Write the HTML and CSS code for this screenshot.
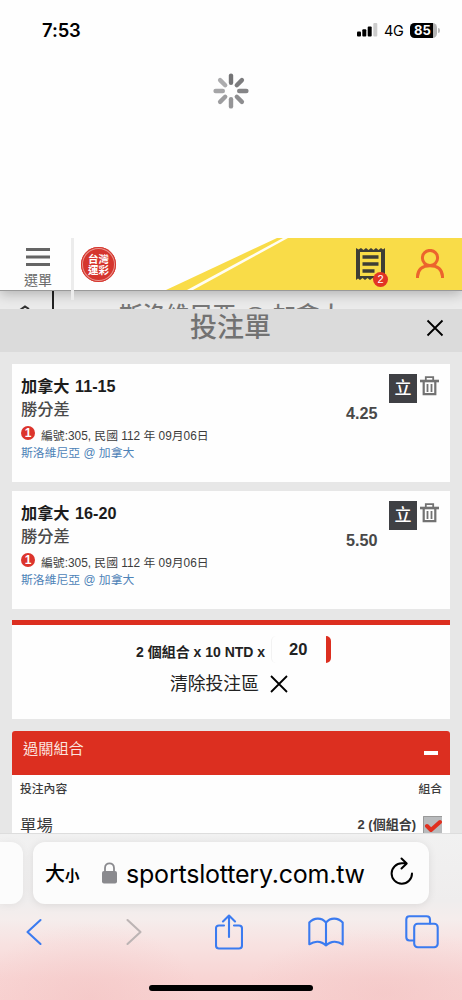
FILE: index.html
```html
<!DOCTYPE html>
<html lang="zh-Hant">
<head>
<meta charset="utf-8">
<title>投注單</title>
<link rel="stylesheet" href="styles.css">
</head>
<body>
<div class="screen">
  <div class="top">
    <div class="status">
      <span class="time">7:53</span>
      <div class="status-right">
        <svg class="signal" width="21" height="14" viewBox="0 0 21 14"><rect x="0" y="8.5" width="4" height="5" rx="1"/><rect x="5.3" y="6.3" width="4" height="7.2" rx="1"/><rect x="10.7" y="3.5" width="4" height="10" rx="1"/><rect x="16.3" y="0" width="4" height="13.5" rx="1" fill="#ccc"/></svg>
        <span class="network">4G</span>
        <span class="battery"><span class="battery-body">85</span><i class="battery-tip"></i></span>
      </div>
    </div>
    <svg class="spinner" width="36" height="36" viewBox="-18 -18 36 36" stroke-width="4.4" stroke-linecap="round">
      <path stroke="#747476" d="M0-8.2V-15.4"/><path stroke="#7c7c7e" d="M5.8-5.8 10.9-10.9"/><path stroke="#858587" d="M8.2 0H15.4"/><path stroke="#8d8d8f" d="M5.8 5.8 10.9 10.9"/><path stroke="#959597" d="M0 8.2V15.4"/><path stroke="#9d9d9f" d="M-5.8 5.8-10.9 10.9"/><path stroke="#a5a5a7" d="M-8.2 0H-15.4"/><path stroke="#acacae" d="M-5.8-5.8-10.9-10.9"/>
    </svg>
  </div>

  <header class="site-header">
    <svg class="banner" width="462" height="52" viewBox="0 0 462 52"><path fill="#f9dc48" d="M166 52 277 0H462V52Z"/><path fill="#fffdf2" d="M187 52 283 0H288L193 52Z"/></svg>
    <div class="menu">
      <svg width="24" height="20" viewBox="0 0 24 20"><path d="M0 2.500H24M0 10H24M0 17.500H24" stroke="#656565" stroke-width="2.800"/></svg>
      <span>選單</span>
    </div>
    <i class="divider"></i>
    <div class="logo"><span>台灣<br>運彩</span></div>
    <div class="slip">
      <svg width="30" height="34" viewBox="0 0 30 34"><path fill="#3e3d35" fill-rule="evenodd" d="M0 1 2.500 2.500 5 1 7.500 3 10 1 12.500 3 15 1 17.500 3 20 1 22.500 3 25 1 27 2.500 29 1V33L26.500 31 24 33 21.500 31 19 33 16.500 31 14 33 11.500 31 9 33 6.500 31 4 33 2 31.500 0 33ZM4 5V29H25V5Z"/><path d="M6.500 10H22.500M6.500 17H22.500M6.500 24H18.500" stroke="#3e3d35" stroke-width="3.400"/></svg>
      <span class="badge">2</span>
    </div>
    <svg class="user" width="30" height="30" viewBox="0 0 30 30" fill="none" stroke="#ec642d" stroke-width="3"><circle cx="15" cy="9" r="7.600"/><path d="M2.500 29V27.500C3 20 8 16.800 15 16.800S27 20 27.500 27.500V29"/></svg>
  </header>

  <div class="match-strip">
    <svg class="back" width="20" height="18" viewBox="0 0 20 18"><path d="M9 19 14 15.500 18 18" fill="none" stroke="#333" stroke-width="2"/></svg>
    <i class="match-line"></i>
    <span class="match-name">斯洛維尼亞 @ 加拿大</span>
  </div>

  <div class="sheet-title"><h1>投注單</h1>
    <svg class="close" width="18" height="18" viewBox="0 0 18 18"><path d="M1.500 1.500 16.500 16.500M16.500 1.500 1.500 16.500"/></svg>
  </div>

  <main class="sheet">
    <section class="bet">
      <div class="bet-info">
        <h2>加拿大 11-15</h2>
        <h3>勝分差</h3>
        <p class="meta"><b class="num">1</b>編號:305, 民國 112 年 09月06日</p>
        <p class="match">斯洛維尼亞 @ 加拿大</p>
      </div>
      <span class="odds">4.25</span>
      <div class="actions"><span class="bank">立</span>
        <svg class="trash" width="19" height="20" viewBox="0 0 19 20" fill="none" stroke="#727272"><path stroke-width="2.600" d="M0 5H19"/><path stroke-width="1.800" d="M5.800 4V1.200H13.200V4"/><path stroke-width="2.200" d="M3.700 5V18.200H15.300V5"/><path stroke-width="1.800" d="M7.500 8V16M11.500 8V16"/></svg>
      </div>
    </section>
    <section class="bet">
      <div class="bet-info">
        <h2>加拿大 16-20</h2>
        <h3>勝分差</h3>
        <p class="meta"><b class="num">1</b>編號:305, 民國 112 年 09月06日</p>
        <p class="match">斯洛維尼亞 @ 加拿大</p>
      </div>
      <span class="odds">5.50</span>
      <div class="actions"><span class="bank">立</span>
        <svg class="trash" width="19" height="20" viewBox="0 0 19 20" fill="none" stroke="#727272"><path stroke-width="2.600" d="M0 5H19"/><path stroke-width="1.800" d="M5.800 4V1.200H13.200V4"/><path stroke-width="2.200" d="M3.700 5V18.200H15.300V5"/><path stroke-width="1.800" d="M7.500 8V16M11.500 8V16"/></svg>
      </div>
    </section>

    <section class="total">
      <div class="stake"><span class="stake-label">2 個組合 x 10 NTD x</span><span class="stake-input">20</span></div>
      <div class="clear"><span>清除投注區</span>
        <svg class="close" width="18" height="18" viewBox="0 0 18 18"><path d="M1 1 17 17M17 1 1 17"/></svg>
      </div>
    </section>

    <section class="combos">
      <div class="combo-head"><span>過關組合</span><i></i></div>
      <div class="combo-cols"><span>投注內容</span><span>組合</span></div>
      <div class="combo-row"><span class="combo-name">單場</span><span class="combo-count">2 (個組合)</span>
        <svg class="check" width="19" height="19" viewBox="0 0 19 19"><rect width="19" height="19" fill="#b9bbbd"/><path d="M.5 19V.5H19" fill="none" stroke="#999" /><path d="M4 10 8 14 17 6" fill="none" stroke="#e03020" stroke-width="4" stroke-linecap="round" stroke-linejoin="round"/></svg>
      </div>
    </section>
  </main>

  <footer class="browser">
    <div class="address-row">
      <div class="prev-tab"></div>
      <div class="address">
        <span class="big">大</span><span class="small">小</span>
        <svg class="lock" width="15" height="22" viewBox="0 0 15 22"><rect y="9" width="15" height="12.500" rx="2" fill="#8a8a8e"/><path d="M3 10V6C3-.3 12-.3 12 6V10" fill="none" stroke="#8a8a8e" stroke-width="1.800"/></svg>
        <span class="url">sportslottery.com.tw</span>
        <svg class="reload" width="24" height="28" viewBox="0 0 24 28" fill="none" stroke="#000" stroke-width="2" stroke-linecap="round" stroke-linejoin="round"><path d="M22 16.500A10.200 10.200 0 1 1 12 6.300H16.500M11.500 1.500 16.700 6.500 11.500 11.500"/></svg>
      </div>
    </div>
    <nav class="toolbar">
      <svg class="nav-back" width="16" height="28" viewBox="0 0 16 28"><path d="M14.500 2 1.500 14 14.500 26"/></svg>
      <svg class="nav-forward" width="16" height="28" viewBox="0 0 16 28"><path d="M1.500 2 14.500 14 1.500 26"/></svg>
      <svg class="nav-share" width="28" height="36" viewBox="0 0 28 36"><path d="M9 11.500H4Q1 11.500 1 14.500V31.500Q1 34.500 4 34.500H24Q27 34.500 27 31.500V14.500Q27 11.500 24 11.500H19M14 23V2M8 7.500 14 1.500 20 7.500"/></svg>
      <svg class="nav-book" width="36" height="30" viewBox="0 0 36 30"><path d="M18 28.500V5.500C13.500.2 6 .5 1.300 5.500V27.300C6.500 23.800 13 23.800 18 28.500C23 23.800 29.500 23.800 34.700 27.300V5.500C30 .5 22.500.2 18 5.500"/></svg>
      <svg width="34" height="34" viewBox="0 0 34 34"><rect x="9.200" y="8.700" width="23.500" height="23.500" rx="3.500"/><path d="M8.500 25.500H4.500Q1.300 25.500 1.300 22.300V4.500Q1.300 1.300 4.500 1.300H21.500Q25 1.300 25 4.500V8.500"/></svg>
    </nav>
    <div class="home"></div>
  </footer>
</div>
</body>
</html>
```
FILE: styles.css
```css
* { box-sizing: border-box; margin: 0; padding: 0; }
body { width: 462px; height: 1000px; overflow: hidden; font-family: "Liberation Sans", "Noto Sans CJK TC", sans-serif; color: #3c3c3c; background: #e7e7e7; }
svg { display: block; flex: none; }
span, h1, h2, h3, p { white-space: nowrap; }
.screen { height: 1000px; display: flex; flex-direction: column; }

.top { position: relative; z-index: 3; height: 238px; flex: none; background: #fefefe; display: flex; flex-direction: column; align-items: center; }
.status { width: 100%; height: 60px; padding: 0 22px 0 42px; display: flex; align-items: center; justify-content: space-between; font-family: Inter, sans-serif; color: #000; }
.time { font-size: 18.400px; font-weight: 600; letter-spacing: -.1px; line-height: 22px; }
.status-right { display: flex; align-items: center; }
.signal { margin-right: 6px; margin-top: -1px; }
.network { width: 20px; margin-right: 6px; font-size: 14.500px; letter-spacing: -.3px; }
.battery { display: flex; align-items: center; }
.battery-body { width: 27px; height: 15px; border-radius: 4.500px; background: linear-gradient(90deg, #000 85%, #b4b4b4 85%); color: #fff; font-size: 13px; font-weight: 700; line-height: 15px; padding-left: 4px; }
.battery-tip { width: 2px; height: 5px; margin-left: 1px; background: #bbb; border-radius: 0 2px 2px 0; }
.spinner { margin-top: 13px; }

.site-header { position: relative; z-index: 2; height: 53px; flex: none; display: flex; background: #fefefe; border-bottom: 1px solid #999; box-shadow: 0 3px 12px rgba(0,0,0,.25); }
.banner { position: absolute; left: 0; top: 0; }
.menu { width: 71px; flex: none; padding: 9px 0 0 24px; font-size: 14px; line-height: 20px; color: #686868; }
.menu svg { margin-left: 2px; }
.menu span { display: block; margin-top: 3px; }
.divider { width: 3px; height: 62px; flex: none; background: #ececec; }
.logo { position: relative; width: 35px; height: 35px; margin: 9px 0 0 7px; border-radius: 50%; background: #d5352d; box-shadow: inset 0 0 0 1px #d5352d, inset 0 0 0 2px #e99790; color: #fff; font-size: 10.500px; line-height: 10.500px; font-weight: 700; text-align: center; padding-top: 7px; }
.slip { position: relative; width: 30px; height: 34px; margin: 9px 29px 0 240px; }
.badge { position: absolute; left: 17px; top: 25px; width: 15px; height: 15px; border-radius: 50%; background: #e23524; color: #fff; font-size: 11px; line-height: 15px; text-align: center; }
.user { position: relative; margin-top: 11px; }

.match-strip { height: 18px; flex: none; overflow: hidden; display: flex; background: #ebebeb; }
.back { margin-left: 11px; }
.match-line { width: 2px; margin-left: 21px; background: #222; }
.match-name { margin-left: 65px; padding-top: 13px; font-size: 23.400px; line-height: 24px; color: #777; font-weight: 500; }

.sheet-title { position: relative; height: 43px; flex: none; display: flex; align-items: center; background: #dbdbdb; padding-left: 190px; }
.sheet-title h1 { width: 235.500px; font-size: 27px; font-weight: 500; line-height: 30px; color: #727272; margin-top: -5px; }
.close { fill: none; stroke: #000; stroke-width: 1.800; }
.sheet-title .close { margin-top: -5px; }

.sheet { height: 481px; flex: none; overflow: hidden; padding: 12px 12px 0; }
.bet { height: 118px; margin-bottom: 9px; padding: 11px 10px 0 9px; background: #fefefe; display: flex; }
.bet-info { width: 325px; flex: none; }
.bet h2 { font-size: 16.200px; line-height: 23px; font-weight: 700; word-spacing: 1px; color: #1c1c1c; }
.bet h3 { font-size: 16.300px; line-height: 22px; font-weight: 500; color: #4a4a4a; }
.meta { display: flex; align-items: center; height: 20px; margin-top: 3px; font-size: 11.850px; line-height: 18px; padding-top: 5px; }
.num { width: 14px; height: 14px; border-radius: 50%; margin: -6px 6px 0 0; background: #dc342c; color: #fff; font-size: 12px; line-height: 14px; text-align: center; }
.match { font-size: 11.850px; line-height: 18px; margin-top: 1px; color: #4e83b8; }
.odds { width: 43px; padding-top: 28px; font-size: 16.200px; line-height: 20px; font-weight: 700; color: #484848; }
.actions { display: flex; gap: 3px; }
.bank { width: 28px; height: 29px; margin-top: -1px; background: #3f4044; color: #fff; font-size: 17px; line-height: 29px; font-weight: 500; text-align: center; }
.trash { margin-top: 1px; }

.total { height: 99px; margin-top: 11px; border-top: 5px solid #dc2f20; background: #fefefe; color: #222; }
.stake { display: flex; height: 48px; padding: 10px 0 0 124px; font-size: 14px; font-weight: 700; line-height: 35px; }
.stake-label { width: 135px; }
.stake-input { width: 60px; height: 27px; margin-top: 1px; border-right: 5px solid #dc2f20; border-left: 1px solid #f2f2f2; border-radius: 5px; padding-left: 17px; font-size: 16.500px; line-height: 27px; }
.clear { display: flex; gap: 11px; padding-left: 158px; font-size: 17.800px; line-height: 23px; }
.clear .close { margin-top: 2px; }

.combos { margin-top: 12px; background: #fefefe; border-radius: 3px 3px 0 0; overflow: hidden; }
.combo-head { height: 44px; background: #dc2f20; color: #fbe3df; padding: 7px 12px 0 11px; display: flex; justify-content: space-between; font-size: 15.200px; line-height: 22px; }
.combo-head i { width: 14px; height: 4px; margin-top: 13px; background: #fff; }
.combo-cols { display: flex; justify-content: space-between; padding: 5px 8px 0 8px; height: 36px; font-size: 11.800px; line-height: 18px; font-weight: 500; }
.combo-row { height: 40px; display: flex; padding: 4px 8px 0; }
.combo-name { flex: 1; font-size: 16.400px; line-height: 20px; }
.combo-count { font-size: 13px; line-height: 20px; font-weight: 700; margin-right: 7px; }
.check { margin-top: 1px; }

.browser { position: relative; height: 167px; flex: none; border-top: 1px solid #ddd; background: radial-gradient(ellipse 110px 75px at 90px 164px, rgba(241,190,190,.4), transparent), radial-gradient(ellipse 140px 65px at 385px 159px, rgba(241,190,190,.4), transparent), linear-gradient(#f1f1f1 0, #efeded 67px, #f5edec 85px, #f8e2e1 110px, #f8d4d3 145px, #f8d2d1); }
.address-row { display: flex; padding-top: 8px; gap: 10px; }
.prev-tab { width: 23px; height: 62px; border-radius: 0 12px 12px 0; background: #fcfcfc; box-shadow: 0 1px 8px rgba(0,0,0,.06); }
.address { width: 396px; height: 62px; border-radius: 12px; background: #fcfcfc; box-shadow: 0 1px 8px rgba(0,0,0,.09); display: flex; align-items: center; padding-left: 12px; color: #000; }
.big { font-size: 20px; line-height: 30px; font-weight: 500; padding-top: 1px; }
.small { width: 37px; font-size: 14.500px; line-height: 20px; font-weight: 700; padding-top: 5px; }
.lock { margin-top: -1px; }
.url { width: 264px; margin-left: 9px; font-family: Inter, sans-serif; font-size: 25px; letter-spacing: -.2px; line-height: 32px; padding-top: 2px; }
.reload { margin-top: -4px; }
.toolbar { display: flex; align-items: center; height: 48px; padding-left: 26px; margin-top: 4px; fill: none; stroke: #3b7bf0; stroke-width: 2.100; stroke-linecap: round; stroke-linejoin: round; }
.nav-back { margin-right: 84px; }
.nav-forward { margin-right: 73px; stroke: #bcb4b4; }
.nav-share { margin-right: 65px; }
.nav-book { margin-right: 61px; }
.home { width: 164px; height: 6px; margin: 29px 0 0 149px; border-radius: 3px; background: #000; }
```
